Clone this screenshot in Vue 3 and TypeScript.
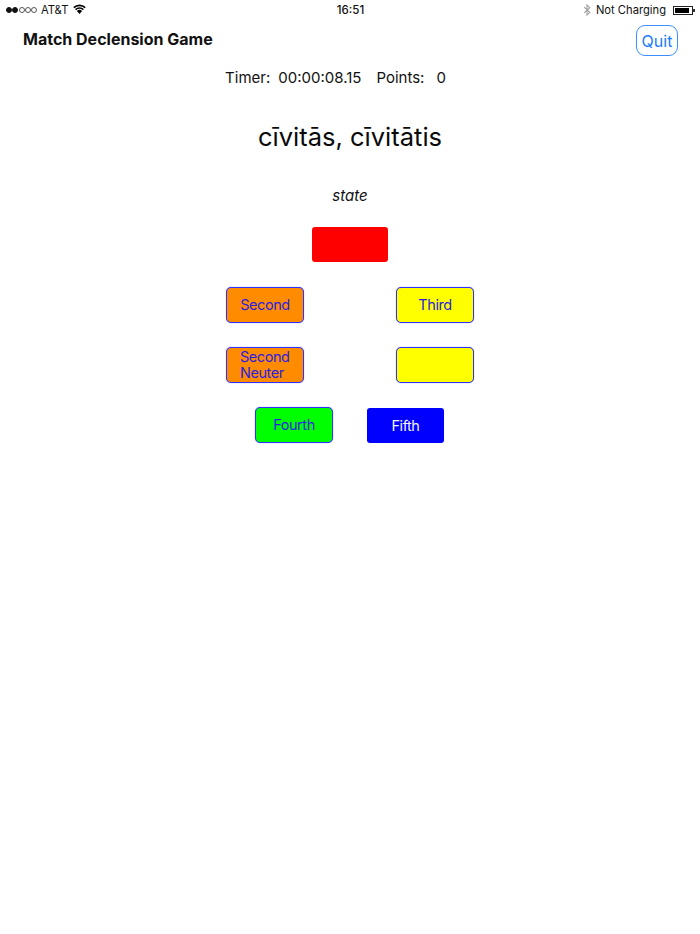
<script setup lang="ts">
interface Tile { label: string; cls: string; multi?: boolean }
const rows: { gap: string; tiles: Tile[] }[] = [
  { gap: 'wide', tiles: [{ label: 'Second', cls: 'orange' }, { label: 'Third', cls: 'yellow' }] },
  { gap: 'wide', tiles: [{ label: 'Second Neuter', cls: 'orange', multi: true }, { label: '', cls: 'yellow' }] },
  { gap: 'narrow', tiles: [{ label: 'Fourth', cls: 'green' }, { label: 'Fifth', cls: 'blue' }] },
]
</script>

<template>
  <div class="page">
    <div class="status">
      <div class="status-left">
        <span class="dots">
          <i class="dot on"></i><i class="dot on"></i><i class="dot"></i><i class="dot"></i><i class="dot"></i>
        </span>
        <span class="carrier">AT&amp;T</span>
        <svg class="wifi" width="13" height="10" viewBox="0 0 13 10">
          <path d="M0.8 3.7A8.2 8.2 0 0 1 12.2 3.7M2.6 5.6A5.6 5.6 0 0 1 10.4 5.6" fill="none" stroke="#000" stroke-width="1.6" />
          <path d="M3.9 7A3.6 3.6 0 0 1 9.1 7L6.5 9.9Z" fill="#000" />
        </svg>
      </div>
      <div class="clock">16:51</div>
      <div class="status-right">
        <svg class="bt" width="8" height="12" viewBox="0 0 8 13">
          <path d="M1 3.5L7 9L4 12V1L7 4L1 9.5" fill="none" stroke="#9a9a9a" stroke-width="1.1" />
        </svg>
        <span class="charging">Not Charging</span>
        <span class="battery"><span class="fill"></span></span><span class="nub"></span>
      </div>
    </div>

    <div class="header">
      <h1 class="title">Match Declension Game</h1>
      <button class="quit">Quit</button>
    </div>

    <div class="score">
      <span>Timer:</span><span>00:00:08.15</span><span class="points">Points:</span><span>0</span>
    </div>

    <div class="word">cīvitās, cīvitātis</div>
    <div class="meaning">state</div>

    <div class="board">
      <div class="tile red plain"></div>
      <div v-for="(row, r) in rows" :key="r" class="row" :class="row.gap">
        <div
          v-for="(tile, t) in row.tiles"
          :key="t"
          class="tile"
          :class="[tile.cls, { multi: tile.multi }]"
        >{{ tile.label }}</div>
      </div>
    </div>
  </div>
</template>

<style scoped>
.page {
  width: 700px;
  height: 934px;
  background: #fff;
  color: #000;
  font-family: Inter, "Liberation Sans", sans-serif;
  overflow: hidden;
}
.status {
  height: 20px;
  display: grid;
  grid-template-columns: 1fr auto 1fr;
  align-items: center;
  padding: 0 5px 0 6px;
  font-size: 11.2px;
  color: #111;
}
.status-left, .status-right { display: flex; align-items: center; }
.status-right { justify-content: flex-end; }
.dots { display: flex; gap: 0.25px; margin-right: 4px; }
.dot {
  width: 6px;
  height: 6px;
  border-radius: 50%;
  border: 0.7px solid #555;
  box-sizing: border-box;
}
.dot.on { background: #111; border-color: #111; }
.wifi { margin-left: 5px; margin-top: -3px; }
.clock { font-size: 11.5px; font-weight: 500; }
.bt { margin-right: 5px; }
.battery {
  margin-left: 7px;
  width: 20px;
  height: 9px;
  border: 1px solid #222;
  box-sizing: border-box;
  padding: 1px 3px 1px 1px;
  display: flex;
}
.fill { flex: 1; background: #000; }
.nub { width: 2px; height: 3px; background: #333; }
.header {
  display: flex;
  justify-content: space-between;
  align-items: flex-start;
  padding: 5px 22px 0 23px;
}
.title {
  margin: 4px 0 0;
  font-size: 16px;
  line-height: 20px;
  font-weight: 700;
  color: #111;
}
.quit {
  width: 42px;
  height: 31px;
  padding: 0;
  border: 1px solid #3d8eff;
  border-radius: 9px;
  background: #fff;
  color: #1a7dff;
  font: 400 16px Inter, "Liberation Sans", sans-serif;
}
.score {
  display: flex;
  justify-content: center;
  gap: 8px;
  margin-top: 12px;
  padding-right: 29px;
  font-size: 15px;
  line-height: 20px;
  color: #111;
}
.points { margin-left: 7px; margin-right: 4px; }
.word {
  margin-top: 31px;
  text-align: center;
  font-size: 25.5px;
  line-height: 36px;
  color: #0a0a0a;
}
.meaning {
  margin-top: 31px;
  text-align: center;
  font-size: 15px;
  font-style: italic;
  line-height: 20px;
  color: #111;
}
.board {
  margin-top: 21px;
  display: flex;
  flex-direction: column;
  align-items: center;
  gap: 24px;
}
.row { display: flex; justify-content: center; }
.row.wide { gap: 92px; }
.row.narrow { gap: 34px; padding-right: 1px; }
.tile {
  width: 78px;
  height: 36px;
  box-sizing: border-box;
  border: 1px solid #3030ff;
  box-shadow: 0 0 1px #6a6aff;
  border-radius: 5px;
  display: flex;
  align-items: center;
  justify-content: center;
  text-align: center;
  font-size: 14.5px;
  letter-spacing: -0.45px;
  line-height: 16px;
  color: #2a1ee0;
}
.tile.plain, .tile.blue { border: none; box-shadow: none; }
.red { width: 76px; height: 35px; background: #f00; margin-bottom: 1px; border-radius: 3px; }
.orange { background: #ff8c00; }
.yellow { background: #ff0; }
.green { background: #0f0; }
.blue { background: #00f; color: #f2f2ff; width: 77px; height: 35px; margin-top: 1px; border-radius: 3px; }
.multi { text-align: left; justify-content: flex-start; padding-left: 13px; padding-right: 10px; }
</style>

<style>
html, body { background: #fff; }
</style>
